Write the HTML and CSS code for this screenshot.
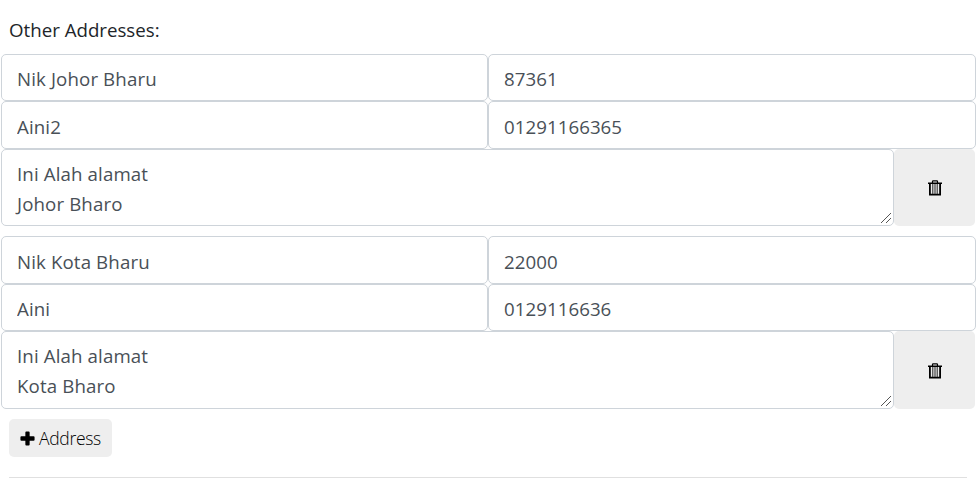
FILE: index.html
```html
<!DOCTYPE html>
<html lang="en">
<head>
  <meta charset="UTF-8" />
  <meta name="viewport" content="width=device-width, initial-scale=1.0"/>
  <title>Other Addresses</title>
  <link rel="stylesheet" href="styles.css">
</head>
<body>
  <div class="addresses">
    <label class="title">Other Addresses:</label>

    <div class="address">
      <div class="row">
        <input class="field name" type="text" value="Nik Johor Bharu">
        <input class="field number" type="text" value="87361">
      </div>
      <div class="row">
        <input class="field name" type="text" value="Aini2">
        <input class="field number" type="text" value="01291166365">
      </div>
      <div class="row last">
        <div class="area">
          <textarea class="field" spellcheck="false">Ini Alah alamat
Johor Bharo</textarea>
          <svg class="grip" width="12" height="12" viewBox="0 0 12 12">
            <path d="M1 11L11 1M6 11L11 6"/>
          </svg>
        </div>
        <button class="btn delete" type="button" aria-label="Delete">
          <svg width="14" height="16" viewBox="0 0 14 16">
            <path d="M4.5 3V1.5Q4.5.8 5.2.8H8.8Q9.5.8 9.5 1.5V3" fill="none" stroke="#000" stroke-width="1.2"/>
            <path d="M0 2.5H14V4H0Z"/>
            <path d="M1.9 4V14.7H12.1V4" fill="none" stroke="#000" stroke-width="1.8"/>
            <path d="M4.8 4V14M7 4V14M9.2 4V14" fill="none" stroke="#222" stroke-width="1"/>
          </svg>
        </button>
      </div>
    </div>

    <div class="address">
      <div class="row second">
        <input class="field name" type="text" value="Nik Kota Bharu">
        <input class="field number" type="text" value="22000">
      </div>
      <div class="row">
        <input class="field name" type="text" value="Aini">
        <input class="field number" type="text" value="0129116636">
      </div>
      <div class="row last">
        <div class="area">
          <textarea class="field" spellcheck="false">Ini Alah alamat
Kota Bharo</textarea>
          <svg class="grip" width="12" height="12" viewBox="0 0 12 12">
            <path d="M1 11L11 1M6 11L11 6"/>
          </svg>
        </div>
        <button class="btn delete" type="button" aria-label="Delete">
          <svg width="14" height="16" viewBox="0 0 14 16">
            <path d="M4.5 3V1.5Q4.5.8 5.2.8H8.8Q9.5.8 9.5 1.5V3" fill="none" stroke="#000" stroke-width="1.2"/>
            <path d="M0 2.5H14V4H0Z"/>
            <path d="M1.9 4V14.7H12.1V4" fill="none" stroke="#000" stroke-width="1.8"/>
            <path d="M4.8 4V14M7 4V14M9.2 4V14" fill="none" stroke="#222" stroke-width="1"/>
          </svg>
        </button>
      </div>
    </div>

    <button class="btn add" type="button">
      <svg width="15" height="15" viewBox="0 0 14 14">
        <path d="M5.9.5H8.1Q9 .5 9 1.4V5H12.7Q13.6 5 13.6 5.9V8.1Q13.6 9 12.7 9H9V12.6Q9 13.5 8.1 13.5H5.9Q5 13.5 5 12.6V9H1.3Q.4 9 .4 8.1V5.9Q.4 5 1.3 5H5V1.4Q5 .5 5.9 .5Z"/>
      </svg>
      <span>Address</span>
    </button>
    <hr>
  </div>
</body>
</html>
```

FILE: styles.css
```css
* {
  box-sizing: border-box;
}

body {
  margin: 0;
  font-family: "Open Sans", "Noto Sans", sans-serif;
  font-size: 18.7px;
  line-height: 30px;
  color: #212529;
  background: #fff;
  overflow: hidden;
}

.addresses {
  padding: 15px 4px 0 1px;
}

.title {
  display: block;
  margin: 0 0 9px 8px;
}

.address {
  margin-bottom: 10px;
}

.row {
  display: flex;
  height: 47px;
}

.row + .row {
  height: 48px;
}

.row.second {
  height: 48px;
}

.row.second + .row {
  height: 47px;
}

.row.row.last {
  height: 77px;
}

.address:nth-of-type(2) .row.row.last {
  height: 78px;
}

.field {
  flex: 1;
  min-width: 0;
  height: 100%;
  padding: 9px 15px 7px;
  border: 1px solid #ced4da;
  border-radius: 5px;
  background: #fff;
  font: inherit;
  letter-spacing: 0.12px;
  color: #495057;
  outline: none;
}

.field.name {
  flex: 0 0 487px;
}

.field.number {
  letter-spacing: 0.05px;
}

.area {
  position: relative;
  flex: 1;
}

.area .field {
  display: block;
  width: 100%;
  resize: none;
  overflow: hidden;
}

.grip {
  position: absolute;
  right: 2px;
  bottom: 2px;
  fill: none;
  stroke: #555;
}

.btn {
  border: none;
  border-radius: 5px;
  background: #eee;
  color: #000;
  font: inherit;
}

.delete {
  display: flex;
  justify-content: center;
  align-items: center;
  width: 81px;
  margin-right: 1px;
  padding-top: 2px;
}

.add {
  display: flex;
  align-items: center;
  gap: 4px;
  width: 103px;
  height: 38px;
  margin-left: 8px;
  padding: 0 0 0 11px;
  font-size: 17.5px;
  font-weight: 300;
  letter-spacing: -0.3px;
}

hr {
  margin: 20px 9px 0 8px;
  border: none;
  border-top: 1px solid #e0e0e0;
}
```
